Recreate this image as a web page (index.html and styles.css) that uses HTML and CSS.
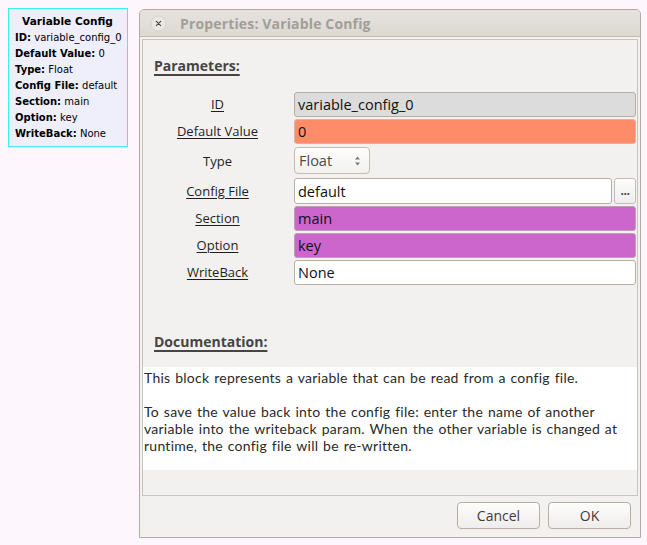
FILE: index.html
```html
<!DOCTYPE html>
<html>
<head>
<meta charset="utf-8">
<link rel="stylesheet" href="styles.css">
</head>
<body>
<div class="block">
  <div class="block-title">Variable Config</div>
  <div class="block-line"><b>ID:</b> variable_config_0</div>
  <div class="block-line"><b>Default Value:</b> 0</div>
  <div class="block-line"><b>Type:</b> Float</div>
  <div class="block-line"><b>Config File:</b> default</div>
  <div class="block-line"><b>Section:</b> main</div>
  <div class="block-line"><b>Option:</b> key</div>
  <div class="block-line"><b>WriteBack:</b> None</div>
</div>

<div class="dialog">
  <div class="titlebar">
    <span class="close"><svg width="17" height="17" viewBox="0 0 17 17"><circle cx="8.5" cy="8.5" r="7.5" fill="#ebe8e4" stroke="#d6d1cb" stroke-width="1"/><path d="M6.3 6.3 L10.7 10.7 M10.7 6.3 L6.3 10.7" stroke="#4a4a4a" stroke-width="1.2" stroke-linecap="round"/></svg></span>
    <span class="title">Properties: Variable Config</span>
  </div>
  <div class="dialog-body">
    <div class="frame">
      <div class="section-head">Parameters:</div>
      <div class="params">
        <span class="plabel link">ID</span>
        <div class="entry e-id">variable_config_0</div>

        <span class="plabel link">Default Value</span>
        <div class="entry e-float">0</div>

        <span class="plabel">Type</span>
        <div class="spin-cell">
          <div class="spin">Float
            <svg class="arrows" width="7" height="12" viewBox="0 0 7 12"><path d="M1 4.5 L3.5 1.5 L6 4.5 Z M1 7.5 L3.5 10.5 L6 7.5 Z" fill="#7a7a7a"/></svg>
          </div>
        </div>

        <span class="plabel link">Config File</span>
        <div class="file-row">
          <div class="entry e-white grow">default</div>
          <div class="dots-btn">...</div>
        </div>

        <span class="plabel link">Section</span>
        <div class="entry e-string">main</div>

        <span class="plabel link">Option</span>
        <div class="entry e-string">key</div>

        <span class="plabel link">WriteBack</span>
        <div class="entry e-white">None</div>
      </div>

      <div class="section-head doc-head">Documentation:</div>
      <div class="doc">
        <div class="doc-line">This block represents a variable that can be read from a config file.</div>
        <div class="doc-line"></div>
        <div class="doc-line">To save the value back into the config file: enter the name of another</div>
        <div class="doc-line">variable into the writeback param. When the other variable is changed at</div>
        <div class="doc-line">runtime, the config file will be re-written.</div>
      </div>
    </div>
    <div class="actions">
      <div class="btn">Cancel</div>
      <div class="btn">OK</div>
    </div>
  </div>
</div>
</body>
</html>
```

FILE: styles.css
```css
html, body {
  margin: 0;
  padding: 0;
}
body {
  background: #fdf6fd;
  width: 647px;
  height: 545px;
  position: relative;
  overflow: hidden;
  font-family: "Open Sans", "Noto Sans", sans-serif;
}

/* flowgraph block on the canvas */
.block {
  position: absolute;
  left: 8px;
  top: 8px;
  width: 120px;
  height: 139px;
  box-sizing: border-box;
  border: 1px solid #3cf0f0;
  background: #efeefb;
  padding: 4px 0 0 6px;
  font-family: "DejaVu Sans", sans-serif;
  font-size: 10px;
  line-height: 16px;
  color: #000;
}
.block-title {
  font-weight: bold;
  text-align: center;
  margin-left: -7px;
  margin-bottom: 1px;
  font-size: 10.6px;
}
.block-line {
  white-space: nowrap;
}

/* dialog window */
.dialog {
  position: absolute;
  left: 139px;
  top: 9px;
  width: 502px;
  height: 529px;
  box-sizing: border-box;
  border: 1px solid #b3aaa1;
  border-radius: 5px 5px 0 0;
  background: #f2f1f0;
  display: flex;
  flex-direction: column;
}
.titlebar {
  height: 26px;
  border-bottom: 1px solid #c4b9ad;
  background: linear-gradient(#e6e3de, #ddd8d2);
  border-radius: 4px 4px 0 0;
  display: flex;
  align-items: center;
  padding-left: 10px;
  gap: 13px;
  flex: none;
}
.close {
  display: flex;
  width: 17px;
  height: 17px;
  margin-top: 1px;
}
.title {
  font-weight: bold;
  font-size: 14px;
  color: #a29e99;
  letter-spacing: 0.15px;
}
.dialog-body {
  flex: 1;
  display: flex;
  flex-direction: column;
  padding: 2px 2px 0 2px;
}
.frame {
  height: 457px;
  box-sizing: border-box;
  border: 1px solid #c9c5be;
  background: #f2f1f0;
  display: flex;
  flex-direction: column;
  flex: none;
}
.section-head {
  font-weight: bold;
  font-size: 14px;
  line-height: 20px;
  color: #454545;
  text-decoration: underline;
  text-decoration-thickness: 2px;
  text-underline-offset: 3px;
  padding-left: 11px;
  margin-top: 16px;
}
.params {
  margin-top: 16px;
  display: grid;
  grid-template-columns: 151px 1fr;
  grid-template-rows: 25px 25px 30px 26px 25px 25px 25px;
  row-gap: 2px;
  padding-right: 1px;
}
.plabel {
  font-size: 13px;
  color: #1e1e1e;
  display: flex;
  align-items: center;
  justify-content: center;
  padding-right: 2px;
  padding-bottom: 1px;
}
.plabel.link {
  text-decoration: underline;
  text-underline-offset: 2px;
}
.entry {
  box-sizing: border-box;
  height: 25px;
  border: 1px solid #b7afa6;
  border-radius: 3px;
  font-size: 14.5px;
  color: #111;
  padding-left: 3px;
  display: flex;
  align-items: center;
  white-space: nowrap;
  overflow: hidden;
}
.e-id { background: #dcdcdc; }
.e-float { background: #ff8c69; border-color: #d8b4a6; }
.e-string { background: #cc66cc; border-color: #b9a2b3; }
.e-white { background: #ffffff; }
.spin-cell {
  padding-top: 1px;
}
.spin {
  box-sizing: border-box;
  width: 76px;
  height: 27px;
  border: 1px solid #c4bdb5;
  border-radius: 4px;
  background: linear-gradient(#fdfdfc, #f2f1ef);
  font-size: 14.5px;
  color: #4b4b4b;
  display: flex;
  align-items: center;
  justify-content: space-between;
  padding: 0 8px 0 4px;
}
.arrows {
  display: block;
}
.file-row {
  display: flex;
  gap: 2px;
}
.file-row .entry {
  height: 26px;
}
.grow {
  flex: 1;
}
.dots-btn {
  box-sizing: border-box;
  width: 22px;
  height: 26px;
  border: 1px solid #c4bdb5;
  border-radius: 3px;
  background: linear-gradient(#fcfcfb, #efeeec);
  font-size: 12px;
  font-weight: bold;
  color: #3a4666;
  display: flex;
  align-items: flex-end;
  justify-content: center;
  padding-bottom: 4px;
  letter-spacing: -0.5px;
}
.doc-head {
  margin-top: 47px;
}
.doc {
  margin-top: 15px;
  height: 103px;
  box-sizing: border-box;
  background: #ffffff;
  padding: 2px 0 0 1px;
  font-family: "Lato", "Open Sans", sans-serif;
  font-size: 14px;
  letter-spacing: 0.25px;
  word-spacing: 1px;
  color: #2a2a2a;
  white-space: nowrap;
}
.doc-line {
  height: 17px;
  line-height: 17px;
}
.actions {
  flex: 1;
  display: flex;
  justify-content: flex-end;
  align-items: flex-start;
  gap: 8px;
  padding: 6px 7px 0 0;
}
.btn {
  box-sizing: border-box;
  width: 83px;
  height: 27px;
  border: 1px solid #b6aea6;
  border-radius: 4px;
  background: linear-gradient(#fdfdfc, #efedeb);
  font-size: 14px;
  color: #3c3c3c;
  display: flex;
  align-items: center;
  justify-content: center;
}
```
